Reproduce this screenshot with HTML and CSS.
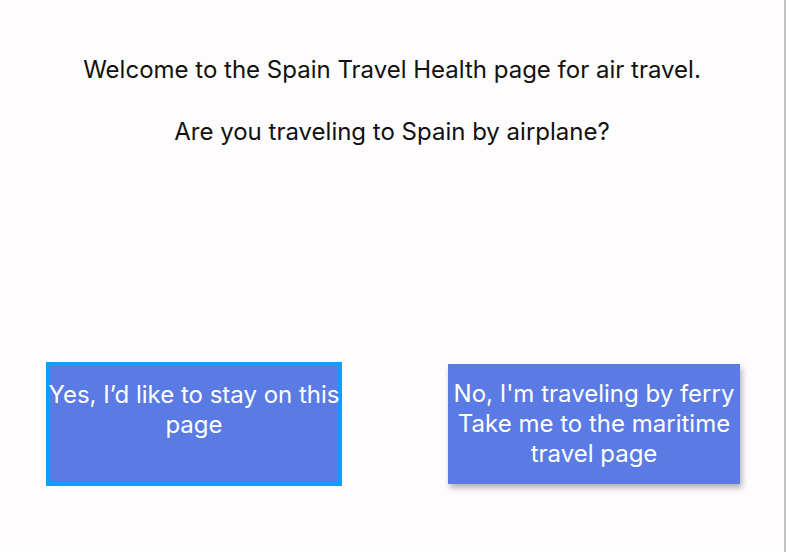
FILE: index.html
```html
<!DOCTYPE html>
<html lang="en">
<head>
  <meta charset="UTF-8" />
  <meta name="viewport" content="width=device-width, initial-scale=1" />
  <title>Spain Travel Health - Air Travel</title>
  <link rel="stylesheet" href="styles.css">
</head>
<body>

  <div class="page">
    <!-- Intro text -->
    <div class="intro">
      <p>Welcome to the Spain Travel Health page for air travel.</p>
      <p>Are you traveling to Spain by airplane?</p>
    </div>

    <!-- Choice buttons -->
    <div class="choices">
      <button class="choice selected"><span class="nowrap">Yes, I’d like to stay on this<br>page</span></button>
      <button class="choice raised"><span>No, I'm traveling by ferry<br>Take me to the maritime travel page</span></button>
    </div>
  </div>

</body>
</html>
```

FILE: styles.css
```css
body {
  font-family: Inter, "Noto Sans", sans-serif;
  margin: 0;
  background-color: #fefcfc;
}

.page {
  height: 552px;
  box-sizing: border-box;
  border-right: 2px solid #c3c3c3;
  padding-top: 55px;
}

/* Intro text */
.intro {
  display: flex;
  flex-direction: column;
  gap: 32px;
  text-align: center;
}

.intro p {
  margin: 0;
  font-size: 24px;
  line-height: 30px;
  color: #111;
}

/* Choice buttons */
.choices {
  display: flex;
  justify-content: space-between;
  padding: 0 44px 0 48px;
  margin-top: 217px;
}

.choice {
  width: 292px;
  height: 120px;
  box-sizing: border-box;
  padding: 16px 0 0;
  border: none;
  background-color: #5b7be4;
  color: white;
  font-family: Inter, "Noto Sans", sans-serif;
  font-size: 24px;
  line-height: 30px;
  text-align: center;
  display: flex;
  align-items: flex-start;
  justify-content: center;
  cursor: pointer;
}

.choice .nowrap {
  white-space: nowrap;
}

.choice.selected {
  border: 2px solid #109dfd;
  outline: 2px solid #109dfd;
  padding-top: 14px;
}

.choice.raised {
  padding-top: 15px;
  box-shadow: 2px 4px 6px rgba(0, 0, 0, 0.3);
}
```
